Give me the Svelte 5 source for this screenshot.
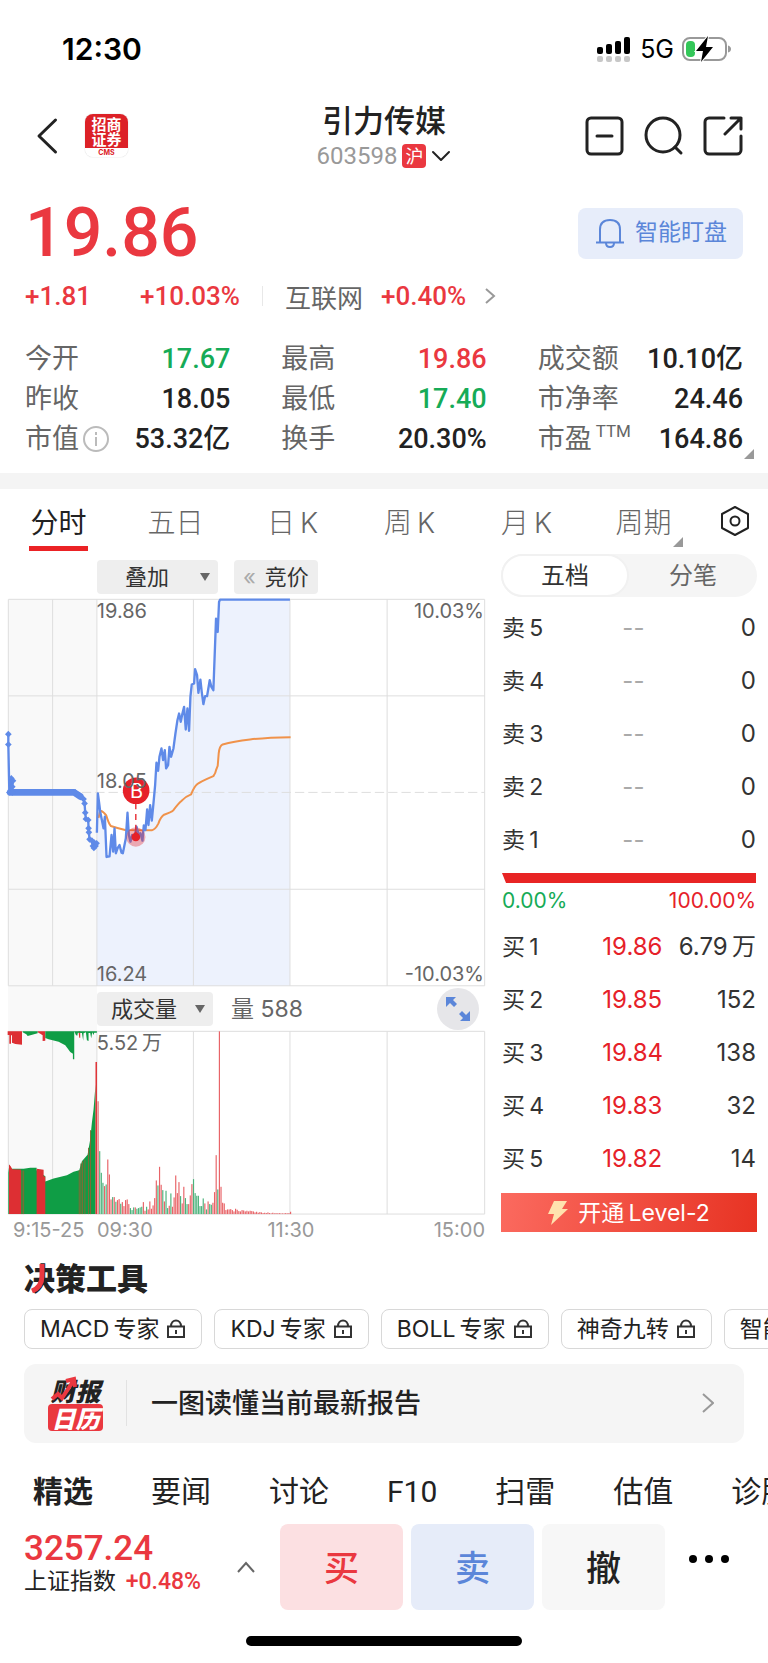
<script>
  const stats = [
    { label: '今开', value: '17.67', tone: 'down' },
    { label: '最高', value: '19.86', tone: 'up' },
    { label: '成交额', value: '10.10亿' },
    { label: '昨收', value: '18.05' },
    { label: '最低', value: '17.40', tone: 'down' },
    { label: '市净率', value: '24.46' },
    { label: '市值', value: '53.32亿', info: true },
    { label: '换手', value: '20.30%' },
    { label: '市盈', sup: 'TTM', value: '164.86', more: true }
  ];
  // Thin spaces separate Chinese from Latin runs.
  const periods = ['分时', '五日', '日\u2009K', '周\u2009K', '月\u2009K', '周期'];
  const sells = [5, 4, 3, 2, 1];
  const buys = [
    ['19.86', '6.79\u2009万'],
    ['19.85', '152'],
    ['19.84', '138'],
    ['19.83', '32'],
    ['19.82', '14']
  ];
  const tools = ['MACD\u2009专家', 'KDJ\u2009专家', 'BOLL\u2009专家', '神奇九转', '智能选股'];
  const sections = ['精选', '要闻', '讨论', 'F10', '扫雷', '估值', '诊股'];

  const price =
    '290,728 293,610 297,640 300,665 305,690 310,715 314,680 319,801 328,799 334,735 339,785 343,715 347,790 352,775 358,765 364,788 368,790 377,745 382,668 386,735 391,755 396,735 402,748 409,710 416,735 421,730 427,752 431,706 436,720 441,658 445,705 450,645 455,692 460,640 465,585 469,518 474,542 478,500 484,475 489,510 494,480 498,535 504,525 508,470 513,500 520,475 526,430 532,390 537,370 542,395 547,370 552,350 557,418 562,355 567,422 571,320 575,283 582,280 585,237 591,255 595,308 601,268 605,305 610,342 615,318 621,318 629,270 634,290 640,300 648,85 653,125 657,35 660,28 870,28';
  const average =
    'M295 684L300 662Q310 664 318 676Q326 702 332 708Q350 714 375 720L455 721Q466 718 475 700Q482 680 492 674Q515 666 520 660Q535 640 545 632Q555 620 573 613Q582 590 592 582Q602 574 640 558Q647 548 648 540L653 527L656 490Q658 468 668 463Q700 454 750 448Q800 442 872 441';
  const auction = [
    [24, 432], [24, 463], [27, 607], [33, 565], [38, 572], [36, 590], [36, 607],
    [225, 607], [234, 615], [242, 621], [250, 627], [253, 640], [255, 668], [257, 687],
    [264, 690], [265, 715], [266, 727], [268, 748], [275, 752], [278, 768], [282, 758], [281, 774], [286, 768], [289, 760]
  ];

  // One entry per minute from 09:30: bar height, with the sign giving the direction.
  const volumes = [
    457, 339, -189, -124, -94, 84, -89, 164, 119, 44, -51, 51, -37, 42, 45, -31, 36, 24, 42, 44,
    30, -18, -12, -20, 20, -16, -18, -20, -22, 36, 10, -22, 14, 38, 16, 26, 48, 101, -86, 142,
    88, -72, 38, -70, -18, 25, -62, 22, 50, 116, 63, 96, -54, 32, 82, -48, -30, 30, 56, 90,
    -105, -63, -55, -55, -24, -24, -47, 32, -14, 38, -30, -28, 34, 66, 177, -74, 549, 82, 34, 32,
    12, 14, 14, 15, 12, 8, 16, 13, 9, 8, 12, 11, 8, 10, 8, 10, 9, 8, 5, 7,
    4, 6, 5, 3, 4, 3, 5, 3, 2, 4, 2, 3, 2, 3, 2, 2, 2, 3, 2, 3, 7
  ];
</script>

{#snippet lock()}
  <svg class="lock" viewBox="0 0 20 20" aria-hidden="true">
    <path d="M2 7.500h16v10.500h-16zM5 7.500C5 3.500 7.500 1.500 10 1.500s5 2 5 6M10 11v4" />
  </svg>
{/snippet}

<div class="page">
  <div class="status">
    <span class="clock">12:30</span>
    <div class="signals">
      <svg width="36" height="26" viewBox="0 0 36 26" aria-hidden="true">
        <g fill="#000">
          <rect x="1" y="11" width="6" height="7" rx="2" />
          <rect x="10" y="8" width="6" height="10" rx="2" />
          <rect x="19" y="5" width="6" height="13" rx="2" />
          <rect x="28" y="1" width="6" height="17" rx="2" />
        </g>
        <g fill="#c7c7c7">
          <rect x="1" y="20" width="6" height="6" rx="2" />
          <rect x="10" y="20" width="6" height="6" rx="2" />
          <rect x="19" y="20" width="6" height="6" rx="2" />
          <rect x="28" y="20" width="6" height="6" rx="2" />
        </g>
      </svg>
      <span class="net">5G</span>
      <svg width="50" height="26" viewBox="0 0 50 26" aria-hidden="true">
        <rect x="1" y="2" width="43" height="22" rx="7" fill="none" stroke="#999" stroke-width="2" />
        <path d="M46 9.500q3 1 3 3.500t-3 3.500z" fill="#999" />
        <rect x="4" y="5" width="9" height="16" rx="4" fill="#34c759" />
        <path d="M26 0L14 15h7l-2 11 12-15h-7z" fill="#000" stroke="#fff" stroke-width="2" paint-order="stroke" />
      </svg>
    </div>
  </div>

  <header class="head">
    <div class="head-left">
      <button class="plain" aria-label="返回">
        <svg width="22" height="38" viewBox="0 0 22 38"><path class="ink" d="M19.500 3L3 19l16.500 16" /></svg>
      </button>
      <div class="broker"><span>招商<br />证券</span><b>CMS</b></div>
    </div>
    <div class="name">
      <h1>引力传媒</h1>
      <button class="plain code">
        603598 <i>沪</i>
        <svg width="20" height="14" viewBox="0 0 20 14" aria-hidden="true"><path class="ink thin" d="M2 3l8 8 8-8" /></svg>
      </button>
    </div>
    <div class="head-right">
      <button class="plain" aria-label="减少">
        <svg width="40" height="40" viewBox="0 0 40 40"><rect class="ink" x="2" y="2" width="35" height="36" rx="4" /><path class="ink" d="M12 20h15" /></svg>
      </button>
      <button class="plain" aria-label="搜索">
        <svg width="40" height="40" viewBox="0 0 40 40"><circle class="ink" cx="19" cy="19" r="17" /><path class="ink" d="M31 31l6 6" /></svg>
      </button>
      <button class="plain" aria-label="分享">
        <svg width="40" height="40" viewBox="0 0 40 40"><path class="ink" d="M21 2H6a4 4 0 0 0-4 4v28a4 4 0 0 0 4 4h28a4 4 0 0 0 4-4V20M22 18L38 2M28 2h10v11" /></svg>
      </button>
    </div>
  </header>

  <section class="quote">
    <div class="price-row">
      <strong>19.86</strong>
      <button class="watch">
        <svg width="28" height="30" viewBox="0 0 28 30" aria-hidden="true"><path d="M4 24V11.500Q4 2 14 2t10 9.500V24M0 24.500h28M10 25q0 4 4 4t4-4" /></svg>
        智能盯盘
      </button>
    </div>
    <div class="change-row">
      <span class="up diff">+1.81</span>
      <span class="up pct">+10.03%</span>
      <a href="#sector"><span class="sector">互联网</span><span class="up">+0.40%</span>
        <svg width="12" height="18" viewBox="0 0 12 18" aria-hidden="true"><path class="arrow" d="M2 2l8 7-8 7" /></svg>
      </a>
    </div>
    <dl class="stats">
      {#each stats as s}
        <div>
          <dt>
            {s.label}{#if s.sup}<sup>{s.sup}</sup>{/if}
            {#if s.info}
              <svg width="26" height="26" viewBox="0 0 26 26" aria-hidden="true"><circle cx="13" cy="13" r="12" fill="none" stroke="#bbb" stroke-width="2" /><path d="M13 11v9M13 6v3" stroke="#bbb" stroke-width="2" /></svg>
            {/if}
          </dt>
          <dd class={s.tone} class:more={s.more}>{s.value}</dd>
        </div>
      {/each}
    </dl>
  </section>

  <nav class="periods">
    {#each periods as p, i}
      <button class="plain" class:active={i === 0} class:drop={i === 5}><span>{p}</span></button>
    {/each}
    <button class="plain" aria-label="图表设置">
      <svg width="30" height="32" viewBox="0 0 30 32"><path class="ink thin" d="M15 2l13 7v14l-13 7-13-7V9z" /><circle class="ink thin" cx="15" cy="16" r="4.500" /></svg>
    </button>
  </nav>

  <main class="trade">
    <div class="charts">
      <div class="chart-tools">
        <div class="pick overlay">
          <select aria-label="叠加"><option>叠加</option></select>
          <svg width="10" height="8" viewBox="0 0 10 8" aria-hidden="true"><path d="M0 0h10L5 8z" /></svg>
        </div>
        <button class="bid"><span>«</span>竞价</button>
      </div>
      <div class="plot">
        <svg viewBox="23 26 1433 1163" aria-label="分时走势">
          <rect x="24" y="27" width="266" height="1161" fill="#f9f9f9" />
          <polygon points="{price} 870,1188 290,1188" fill="#edf2fd" />
          <path class="grid" d="M24 27H1455V1188H24zM157 27V1188M290 27V1188M580 27V1188M870 27V1188M1162 27V1188M24 317H1455M24 898H1455" />
          <path d="M245 607H1455" stroke="#dedede" stroke-width="3" stroke-dasharray="28 12" fill="none" />
          <path d={average} class="avg" />
          <polyline points={price} class="line" />
          <polyline points={auction.map((p) => p.join(',')).join(' ')} class="line" />
          <path d="M30 607H222L240 619" fill="none" stroke="#5f8ae8" stroke-width="20" stroke-linecap="round" stroke-linejoin="round" />
          {#each auction as [x, y]}
            <path d="M{x - 10} {y}l10 -10l10 10l-10 10z" fill="#5f8ae8" />
          {/each}
          <circle cx="408" cy="602" r="40" fill="#e62129" />
          <path d="M407 640V725" stroke="#e62129" stroke-width="4" stroke-dasharray="18 14" />
          <circle cx="407" cy="741" r="29" fill="#e62129" opacity="0.35" />
          <circle cx="407" cy="741" r="13" fill="#e62129" />
          <path d="M407 722l7 12h-14z" fill="#e62129" />
          <text x="409" y="624" text-anchor="middle" font-size="60" fill="#fff">B</text>
        </svg>
        <span class="tag high">19.86</span>
        <span class="tag mid">18.05</span>
        <span class="tag low">16.24</span>
        <span class="tag rise">10.03%</span>
        <span class="tag fall">-10.03%</span>
      </div>
      <div class="volume-head">
        <div class="pick volume">
          <select aria-label="副图指标"><option>成交量</option></select>
          <svg width="10" height="8" viewBox="0 0 10 8" aria-hidden="true"><path d="M0 0h10L5 8z" /></svg>
        </div>
        <span class="amount">量 588</span>
        <button class="expand" aria-label="全屏">
          <svg width="26" height="26" viewBox="0 0 26 26"><path d="M1 1h10L8 4l4 4-3 3-4-4-4 4zM25 25H15l3-3-4-4 3-3 4 4 4-4z" /></svg>
        </button>
      </div>
      <div class="plot">
        <svg viewBox="23 184 1433 551" aria-label="成交量">
          <rect x="24" y="185" width="266" height="549" fill="#f9f9f9" />
          <path class="grid" d="M24 185H1455V734H24zM157 185V734M290 185V734M580 185V734M870 185V734M1162 185V734" />
          <path d="M24 734V610L27 585 32 598H70L90 595H109V602L135 620V636L160 627 200 617 220 607 237 602 245 575 262 556 270 510 275 460 280 420 286 345V734z" fill="#0f9d45" />
          <path d="M26 734V585L31 590 36 599 62 600V734zM109 734V598L130 601V621H135V734z" fill="#dd2f33" />
          <path d="M65 734V603M70 734V603M237 734V602M242 734V582M247 734V575M254 734V570M265 734V535M271 734V482" stroke="#7f6a35" stroke-width="3" />
          <path d="M22 185H65V225L45 223 35 219V197H32V222H27V196H22zM112 185H135V213L127 214V197L120 192 112 188zM235 185H240V204H237z" fill="#dd2f33" />
          <path d="M67 185H112V191L82 199 78 194 67 188zM135 185H222V269H218V252L210 247 195 227 175 216 145 209 135 205zM222 185H290V189L282 189 280 196 276 188 273 206 270 190H265V214L260 212 257 188 250 191 249 213 245 190 233 189 231 198 227 196z" fill="#0f9d45" />
          {#each volumes as v, i}
            <rect x={287 + i * 4.86} y={734 - Math.abs(v)} width="3.500" height={Math.abs(v)} fill={v > 0 ? '#e86468' : '#4cb37c'} />
          {/each}
          <path d="M288 277V734" stroke="#dd2f33" stroke-width="4" />
        </svg>
        <span class="tag high">5.52{'\u2009'}万</span>
      </div>
      <div class="axis"><span>9:15-25</span><span>09:30</span><span>11:30</span><span>15:00</span></div>
    </div>

    <aside class="book">
      <div class="switch">
        <button class="on">五档</button>
        <button>分笔</button>
      </div>
      <table aria-label="卖盘">
        <tbody>
          {#each sells as n}
            <tr><th scope="row">卖{'\u2009'}{n}</th><td class="none">--</td><td>0</td></tr>
          {/each}
        </tbody>
      </table>
      <div class="ratio">
        <div class="bar"></div>
        <div class="shares"><span>0.00%</span><span>100.00%</span></div>
      </div>
      <table aria-label="买盘">
        <tbody>
          {#each buys as [p, q], i}
            <tr><th scope="row">买{'\u2009'}{i + 1}</th><td class="bidprice">{p}</td><td>{q}</td></tr>
          {/each}
        </tbody>
      </table>
      <button class="level">
        <svg width="20" height="24" viewBox="0 0 20 24" aria-hidden="true"><path d="M6 0h13l-5 8h6L3 24l3-11H0z" fill="#ffe2ae" /></svg>
        开通{'\u2009'}Level-2
      </button>
    </aside>
  </main>

  <section class="tools">
    <h2>决策工具
      <svg width="32" height="46" viewBox="0 0 32 46" aria-hidden="true"><path d="M18 10V22Q18 33 8 37" /></svg>
    </h2>
    <div class="chips">
      {#each tools as t}
        <button>{t}{@render lock()}</button>
      {/each}
    </div>
    <a class="report" href="#report">
      <span class="calendar">
        <span class="top">财报<svg width="28" height="26" viewBox="0 0 28 26" aria-hidden="true"><path d="M2 23l6-5 4 4L24 4M16 5l8-2 1 8" /></svg></span>
        <span class="bottom">日历</span>
      </span>
      <span class="headline">一图读懂当前最新报告</span>
      <svg width="12" height="22" viewBox="0 0 12 22" aria-hidden="true"><path class="arrow" d="M1 2l10 9-10 9" /></svg>
    </a>
  </section>

  <nav class="sections">
    {#each sections as s, i}
      <a href="#section-{i}" class:active={i === 0}>{s}</a>
    {/each}
  </nav>

  <footer class="dock">
    <button class="plain index">
      <span class="index-text">
        <strong>3257.24</strong>
        <span>上证指数 <em>+0.48%</em></span>
      </span>
      <svg width="20" height="12" viewBox="0 0 20 12" aria-hidden="true"><path class="caret" d="M2 11l8-9 8 9" /></svg>
    </button>
    <button class="act buy">买</button>
    <button class="act sell">卖</button>
    <button class="act cancel">撤</button>
    <button class="plain dots" aria-label="更多">
      <svg width="42" height="12" viewBox="0 0 42 12"><circle cx="5" cy="6" r="4" /><circle cx="21" cy="6" r="4" /><circle cx="37" cy="6" r="4" /></svg>
    </button>
  </footer>
  <div class="home"></div>
</div>

<style>
  :global(body) { background: #fff; overflow-x: hidden; }
  .page { font-family: Inter, "Noto Sans CJK SC", sans-serif; color: #222; overflow: hidden; }
  .page * { box-sizing: border-box; }
  svg { display: block; flex: none; }
  button, select { font: inherit; color: inherit; border: 0; padding: 0; margin: 0; cursor: pointer; }
  .plain { background: none; }
  a { color: inherit; text-decoration: none; }
  h1, h2, dl, dd { margin: 0; }
  .ink { fill: none; stroke: #222; stroke-width: 3; stroke-linecap: round; stroke-linejoin: round; }
  .thin { stroke-width: 2; }
  .arrow { fill: none; stroke: #999; stroke-width: 2; }
  .up { color: #ea3840; }
  .down { color: #16ab57; }

  .status { display: flex; justify-content: space-between; align-items: center; height: 98px; padding: 0 36px 0 62px; color: #000; }
  .clock { font-size: 30px; font-weight: 600; }
  .signals { display: flex; align-items: center; gap: 8px; }
  .net { font-size: 25px; line-height: 30px; }

  .head { display: grid; grid-template-columns: 1fr auto 1fr; align-items: center; height: 75px; padding: 0 25px; }
  .head-left, .head-right { display: flex; align-items: center; }
  .head-left { gap: 27px; padding-left: 11px; }
  .head-right { justify-content: flex-end; gap: 19px; }
  .broker { width: 43px; height: 43px; border-radius: 8px; box-shadow: 0 0 1px #aaa; background: linear-gradient(#dc2127 34px, #fff 34px); color: #fff; text-align: center; }
  .broker span { display: block; height: 34px; padding-top: 2px; font: 700 15px/15px "Noto Sans CJK SC", sans-serif; }
  .broker b { display: block; color: #dc2127; font-size: 7px; line-height: 9px; }
  .name { text-align: center; padding-bottom: 3px; }
  h1 { margin-bottom: 3px; font: 500 31px/40px "Noto Sans CJK SC", sans-serif; }
  .code { display: flex; align-items: center; gap: 5px; font: 400 24px/28px Roboto, sans-serif; color: #999; }
  .code i { width: 24px; height: 24px; border-radius: 4px; background: #ea3840; color: #fff; font: 400 18px/23px "Noto Sans CJK SC", sans-serif; }

  .quote { padding: 24px 25px 14px; border-bottom: 16px solid #f4f4f4; font-family: Roboto, "Noto Sans CJK SC", sans-serif; font-size: 26px; }
  .price-row { display: flex; justify-content: space-between; align-items: center; height: 72px; }
  .price-row strong { font-size: 68px; line-height: 76px; font-weight: 500; color: #ea3840; }
  .watch { display: flex; align-items: center; gap: 11px; height: 51px; padding: 0 16px 0 18px; border-radius: 8px; background: #e7edfa; color: #5b86d9; font-size: 23px; line-height: 32px; }
  .watch path { fill: none; stroke: #5b86d9; stroke-width: 2; }
  .change-row { display: flex; align-items: center; height: 54px; }
  .change-row .up { font-weight: 500; }
  .diff { width: 115px; }
  .pct { width: 122px; }
  .change-row a { display: flex; align-items: center; gap: 18px; border-left: 1px solid #e8e8e8; padding-left: 22px; height: 20px; }
  .sector { color: #666; }
  .stats { display: grid; grid-template-columns: repeat(3, 1fr); column-gap: 51px; padding-top: 16px; font-size: 27px; }
  .stats div { display: flex; justify-content: space-between; align-items: center; height: 40px; }
  dt { display: flex; align-items: center; gap: 4px; color: #666; line-height: 36px; white-space: nowrap; }
  sup { align-self: flex-start; font-size: 17px; line-height: 20px; }
  dd { position: relative; line-height: 36px; font-weight: 500; white-space: nowrap; }
  .more::after, .drop span::after { content: ""; position: absolute; right: -11px; bottom: -2px; border: 5px solid transparent; border-right-color: #999; border-bottom-color: #999; }

  .periods { display: grid; grid-template-columns: repeat(6, 117fr) 66fr; height: 65px; font-size: 28px; color: #666; }
  .periods button { display: flex; align-items: center; justify-content: center; padding-bottom: 2px; font-weight: 300; }
  .periods span { position: relative; }
  .periods .active { color: #222; font-weight: 400; }
  .active span::after { content: ""; position: absolute; left: -1px; right: -1px; bottom: -10px; height: 5px; background: #eb2225; }
  .periods .drop span::after { bottom: -6px; }

  .trade { display: grid; grid-template-columns: 477fr 256fr; gap: 16px; padding: 0 11px 0 8px; }
  .charts { min-width: 0; }
  .chart-tools { display: flex; align-items: center; gap: 16px; height: 45px; padding-left: 89px; }
  .pick { display: grid; align-items: center; height: 34px; border-radius: 4px; background: #eee; }
  .pick > * { grid-area: 1 / 1; }
  .pick select { appearance: none; width: 100%; height: 34px; background: none; font-size: 22px; color: #333; }
  .pick svg { justify-self: end; margin-right: 8px; fill: #666; pointer-events: none; }
  .overlay { width: 121px; }
  .overlay select { padding-left: 28px; }
  .volume { width: 116px; }
  .volume select { padding-left: 14px; }
  .bid { display: flex; align-items: center; gap: 9px; height: 34px; padding: 0 9px; border-radius: 4px; background: #eee; color: #333; font-size: 22px; line-height: 32px; }
  .bid span { color: #aaa; line-height: 22px; }
  .plot { position: relative; }
  .plot svg { width: 100%; height: auto; overflow: visible; }
  .grid { fill: none; stroke: #dedede; stroke-width: 3; }
  .line { fill: none; stroke: #5f8ae8; stroke-width: 7; stroke-linejoin: round; }
  .avg { fill: none; stroke: #f0924a; stroke-width: 6; }
  .tag { position: absolute; font-size: 20px; line-height: 24px; color: #666; }
  .high { left: 18%; top: 0; margin-left: 3px; }
  .mid { left: 18%; bottom: 50%; margin-left: 3px; }
  .low { left: 18%; bottom: 0; margin-left: 3px; }
  .rise { right: 1px; top: 0; }
  .fall { right: 1px; bottom: 0; }
  .volume-head { display: flex; align-items: center; height: 45px; padding: 0 6px 0 89px; background: linear-gradient(90deg, #f9f9f9 89px, #fff 89px); }
  .amount { margin-left: 18px; font-size: 23px; line-height: 30px; color: #666; }
  .expand { display: grid; place-items: center; width: 42px; height: 42px; margin-left: auto; border-radius: 50%; background: #e6e6e9; }
  .expand path { fill: #5b86d9; }
  .axis { display: grid; grid-template-columns: 89px 1fr auto 1fr; height: 30px; font-size: 20px; line-height: 30px; color: #999; white-space: nowrap; }
  .axis span:first-child { padding-left: 5px; }
  .axis span:last-child { text-align: right; }

  .book { font-size: 24px; color: #333; }
  .switch { display: grid; grid-template-columns: 1fr 1fr; height: 43px; margin-bottom: 5px; border-radius: 22px; background: #f5f5f5; color: #666; }
  .switch button { border-radius: 22px; background: none; line-height: 32px; }
  .switch .on { background: #fff; border: 2px solid #f1f1f1; color: #333; }
  table { width: 100%; border-collapse: collapse; table-layout: fixed; }
  tr { height: 53px; }
  th, td { padding: 0 1px; text-align: left; vertical-align: baseline; font-weight: 400; line-height: 52px; white-space: nowrap; }
  th { width: 31%; font-size: 23px; }
  td:last-child { text-align: right; }
  .none { padding-left: 42px; color: #aaa; }
  .bidprice { padding-left: 22px; color: #e62129; }
  .ratio { padding: 6px 1px 0; height: 54px; }
  .bar { height: 10px; background: #e82424; clip-path: polygon(0 0, 100% 0, 100% 100%, 4px 100%); }
  .shares { display: flex; justify-content: space-between; font-size: 21px; line-height: 24px; margin-top: 6px; color: #e62129; }
  .shares span:first-child { color: #16ab57; }
  .level { display: flex; align-items: center; justify-content: center; gap: 10px; width: 100%; height: 39px; margin-top: 7px; background: linear-gradient(100deg, #fb6a5f, #e73323); color: #fff; font-size: 23px; line-height: 32px; }

  .tools { padding: 9px 24px 0; }
  h2 { position: relative; font: 900 31px/46px "Noto Sans CJK SC", sans-serif; }
  h2 svg { position: absolute; left: 0; top: 0; }
  h2 path { fill: none; stroke: #ea3840; stroke-width: 5; }
  .chips { display: flex; gap: 12px; margin-top: 9px; }
  .chips button { display: flex; align-items: center; gap: 7px; flex: none; height: 40px; padding: 0 15px; border: 1px solid #d8d8d8; border-radius: 8px; background: #fff; font-size: 23px; line-height: 32px; white-space: nowrap; }
  .lock { width: 20px; height: 20px; fill: none; stroke: #333; stroke-width: 2; }
  .report { display: flex; align-items: center; height: 79px; margin-top: 15px; padding: 0 30px 0 24px; border-radius: 12px; background: #f5f5f5; }
  .calendar { width: 55px; font: italic 900 25px/28px "Noto Sans CJK SC", sans-serif; text-align: center; }
  .calendar span { display: block; }
  .top { position: relative; }
  .top svg { position: absolute; left: 2px; top: 0; }
  .top path { fill: none; stroke: #ea3840; stroke-width: 4; }
  .calendar .bottom { border-radius: 4px; background: #ea3840; color: #fff; font-size: 24px; line-height: 27px; }
  .headline { flex: 1; margin-left: 23px; padding: 2px 0 0 24px; border-left: 1px solid #e2e2e2; font-size: 27px; line-height: 44px; font-weight: 500; }

  .sections { display: flex; align-items: center; gap: 58px; height: 68px; margin-top: 13px; padding: 4px 0 0 33px; font: 400 30px/40px Roboto, "Noto Sans CJK SC", sans-serif; white-space: nowrap; }
  .sections .active { font-weight: 700; }
  .dock { display: grid; grid-template-columns: 248fr 123fr 123fr 123fr 71fr; gap: 8px; padding: 0 24px; height: 86px; font-family: Roboto, "Noto Sans CJK SC", sans-serif; }
  .index { display: flex; align-items: center; justify-content: space-between; padding-right: 16px; text-align: left; white-space: nowrap; }
  .index-text { padding-bottom: 5px; font-size: 23px; line-height: 30px; }
  .index-text > * { display: block; }
  .index strong { font-size: 35px; line-height: 36px; font-weight: 500; color: #ea3840; }
  .index em { font-style: normal; font-weight: 500; color: #ea3840; margin-left: 4px; }
  .caret { fill: none; stroke: #666; stroke-width: 2; }
  .act { padding-bottom: 3px; border-radius: 8px; font-size: 35px; font-weight: 500; }
  .buy { background: #fce0e2; color: #ea3840; }
  .sell { background: #e6ecf9; color: #5b86d9; }
  .cancel { background: #f7f7f7; }
  .dots { display: grid; place-items: center; padding-bottom: 16px; }
  .home { width: 36%; height: 10px; margin: 26px auto 17px; border-radius: 5px; background: #000; }
</style>
